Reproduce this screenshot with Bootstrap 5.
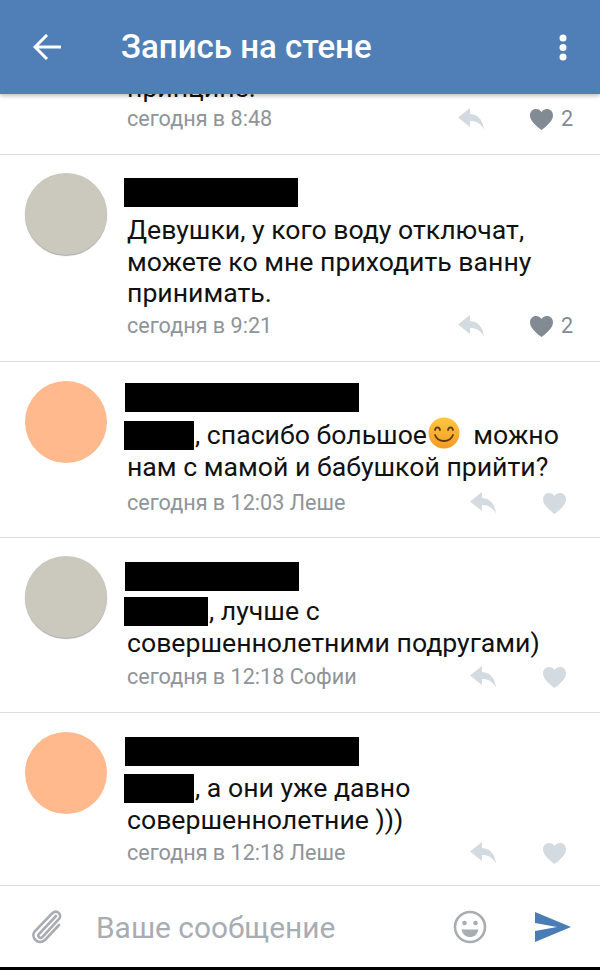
<!DOCTYPE html>
<html lang="ru">
<head>
  <meta charset="UTF-8" />
  <meta name="viewport" content="width=device-width, initial-scale=1" />
  <title>Запись на стене</title>
  <link href="https://cdn.jsdelivr.net/npm/bootstrap@5.3.3/dist/css/bootstrap.min.css" rel="stylesheet" />
  <style>
    html, body { height: 970px; overflow: hidden; }
    body { font-family: Roboto, "Liberation Sans", sans-serif; background: #000; color: #111; }

    .app-screen { height: 967px; background: #fff; }
    .top-bar {
      height: 94px;
      flex: none;
      background: #4f7fb6;
      color: #fff;
      box-shadow: 0 2px 4px rgba(0, 0, 0, .25);
      z-index: 2;
      padding: 0 33px 0 33px;
    }
    .top-title { font-size: 33px; font-weight: 500; margin-left: 60px; }

    .post-feed { min-height: 0; overflow: hidden; }
    .post-row { padding: 19px 28px 20px 25px; border-bottom: 1px solid #dcdcdc; }
    .post-clipped { height: 61px; padding-top: 0; padding-bottom: 20px; justify-content: flex-end; overflow: hidden; }
    .user-pic { width: 82px; height: 82px; flex: none; margin-right: 17px; }
    .pic-grey { background: #cbc8bd; box-shadow: 0 1px 1px rgba(0, 0, 0, .35); margin-top: -1px; }
    .pic-peach { background: #ffb98c; }
    .post-main { min-width: 0; }
    .name-bar { background: #000; height: 29px; margin-left: 1px; }
    .name-short { width: 174px; }
    .name-long { width: 234px; }
    .post-text { font-size: 26.65px; line-height: 31.5px; padding-left: 3px; }
    .hidden-name { display: inline-block; background: #000; height: 29px; vertical-align: -6px; margin-left: -3px; margin-right: 1px; }
    .smile { width: 32px; height: 32px; vertical-align: -5px; margin: -6px 0 0 1px; }
    .post-meta { height: 30px; padding-left: 3px; font-size: 21.6px; color: #8f9499; }
    .reply-icon { width: 27px; height: 22px; }
    .like-icon { width: 23px; height: 21px; }
    .like-off { margin-left: 46px; margin-right: 6px; }
    .like-on { margin-left: 45px; margin-right: 8px; }
    .like-count { width: 11px; color: #828a93; }

    /* per-post vertical offsets, the rows in the app are not quite even */
    .post-a .post-main { padding-top: 4px; }
    .post-a .name-bar { margin-bottom: 8px; margin-left: 0; }
    .post-a .post-meta { margin-top: 1.5px; }
    .post-b { padding-bottom: 19px; }
    .post-b .post-main { padding-top: 2px; }
    .post-b .name-bar { margin-bottom: 8px; }
    .post-b .post-meta { margin-top: 5px; }
    .post-c .post-main { padding-top: 5px; }
    .post-c .name-bar { margin-bottom: 5px; }
    .post-c .post-meta { margin-top: 3px; }
    .post-d { padding-bottom: 17px; }
    .post-d .post-main { padding-top: 5px; }
    .post-d .name-bar { margin-bottom: 7px; }
    .post-d .post-meta { margin-top: 2px; }

    .composer { height: 81px; flex: none; padding: 0 29px 0 30px; }
    .composer-text { font-size: 29.9px; color: #a8adb2; margin-left: 33px; padding-top: 3px; }
    .smile-btn { margin-right: 48px; }
  </style>
</head>
<body>
  <div class="app-screen d-flex flex-column">
    <div class="top-bar d-flex align-items-center position-relative">
      <svg width="28" height="26" viewBox="0 0 28 26" fill="none" stroke="#fff" stroke-width="3"><path d="M28 13H2M14 1 2 13l12 12"/></svg>
      <div class="top-title flex-grow-1">Запись на стене</div>
      <svg width="8" height="27" viewBox="0 0 8 27" fill="#fff"><circle cx="4" cy="4" r="3.5"/><circle cx="4" cy="13.5" r="3.5"/><circle cx="4" cy="23" r="3.5"/></svg>
    </div>

    <div class="post-feed flex-grow-1">
      <div class="post-row post-clipped d-flex flex-column">
        <div class="post-text" style="margin-left:99px">принципе.</div>
        <div class="post-meta d-flex align-items-center" style="margin-left:99px">
          <span class="flex-grow-1">сегодня в 8:48</span>
          <svg class="reply-icon" viewBox="0 0 27 22"><path fill="#d3dae0" d="M12 0 0 9.500 12 19v-6c6 0 11 2.500 14 8.500C25 12 20 6.500 12 6z"/></svg>
          <svg class="like-icon like-on" viewBox="0 0 23 21"><path fill="#828a93" d="M11.500 21C4 15 0 11 0 6.200 0 2.600 2.700 0 6 0c2.200 0 4.300 1.100 5.500 3C12.700 1.100 14.800 0 17 0c3.300 0 6 2.600 6 6.200C23 11 19 15 11.500 21z"/></svg>
          <span class="like-count">2</span>
        </div>
      </div>

      <div class="post-row post-a d-flex">
        <div class="user-pic pic-grey rounded-circle"></div>
        <div class="post-main flex-grow-1">
          <div class="name-bar name-short"></div>
          <div class="post-text">Девушки, у кого воду отключат, можете ко мне приходить ванну принимать.</div>
          <div class="post-meta d-flex align-items-center">
            <span class="flex-grow-1">сегодня в 9:21</span>
            <svg class="reply-icon" viewBox="0 0 27 22"><path fill="#d3dae0" d="M12 0 0 9.500 12 19v-6c6 0 11 2.500 14 8.500C25 12 20 6.500 12 6z"/></svg>
            <svg class="like-icon like-on" viewBox="0 0 23 21"><path fill="#828a93" d="M11.500 21C4 15 0 11 0 6.200 0 2.600 2.700 0 6 0c2.200 0 4.300 1.100 5.500 3C12.700 1.100 14.800 0 17 0c3.300 0 6 2.600 6 6.200C23 11 19 15 11.500 21z"/></svg>
            <span class="like-count">2</span>
          </div>
        </div>
      </div>

      <div class="post-row post-b d-flex">
        <div class="user-pic pic-peach rounded-circle"></div>
        <div class="post-main flex-grow-1">
          <div class="name-bar name-long"></div>
          <div class="post-text"><span class="hidden-name" style="width:70px"></span>, спасибо большое<svg class="smile" viewBox="0 0 32 32"><defs><linearGradient id="smileFill" x1="0" y1="0" x2="0" y2="1"><stop offset="0" stop-color="#fdc843"/><stop offset="1" stop-color="#f59a23"/></linearGradient></defs><circle cx="16" cy="16" r="15.500" fill="url(#smileFill)"/><path d="M7 13c1-3.500 4-3.500 5 0M20 13c1-3.500 4-3.500 5 0M7 18c3 8 15 8 18 0" fill="none" stroke="#5b3a12" stroke-width="1.800" stroke-linecap="round"/></svg>&nbsp; можно нам с мамой и бабушкой прийти?</div>
          <div class="post-meta d-flex align-items-center">
            <span class="flex-grow-1">сегодня в 12:03 Леше</span>
            <svg class="reply-icon" viewBox="0 0 27 22"><path fill="#d3dae0" d="M12 0 0 9.500 12 19v-6c6 0 11 2.500 14 8.500C25 12 20 6.500 12 6z"/></svg>
            <svg class="like-icon like-off" viewBox="0 0 23 21"><path fill="#d3dae0" d="M11.500 21C4 15 0 11 0 6.200 0 2.600 2.700 0 6 0c2.200 0 4.300 1.100 5.500 3C12.700 1.100 14.800 0 17 0c3.300 0 6 2.600 6 6.200C23 11 19 15 11.500 21z"/></svg>
          </div>
        </div>
      </div>

      <div class="post-row post-c d-flex">
        <div class="user-pic pic-grey rounded-circle"></div>
        <div class="post-main flex-grow-1">
          <div class="name-bar name-short"></div>
          <div class="post-text"><span class="hidden-name" style="width:84px"></span>, лучше с совершеннолетними подругами)</div>
          <div class="post-meta d-flex align-items-center">
            <span class="flex-grow-1">сегодня в 12:18 Софии</span>
            <svg class="reply-icon" viewBox="0 0 27 22"><path fill="#d3dae0" d="M12 0 0 9.500 12 19v-6c6 0 11 2.500 14 8.500C25 12 20 6.500 12 6z"/></svg>
            <svg class="like-icon like-off" viewBox="0 0 23 21"><path fill="#d3dae0" d="M11.500 21C4 15 0 11 0 6.200 0 2.600 2.700 0 6 0c2.200 0 4.300 1.100 5.500 3C12.700 1.100 14.800 0 17 0c3.300 0 6 2.600 6 6.200C23 11 19 15 11.500 21z"/></svg>
          </div>
        </div>
      </div>

      <div class="post-row post-d d-flex">
        <div class="user-pic pic-peach rounded-circle"></div>
        <div class="post-main flex-grow-1">
          <div class="name-bar name-long"></div>
          <div class="post-text"><span class="hidden-name" style="width:70px"></span>, а они уже давно совершеннолетние )))</div>
          <div class="post-meta d-flex align-items-center">
            <span class="flex-grow-1">сегодня в 12:18 Леше</span>
            <svg class="reply-icon" viewBox="0 0 27 22"><path fill="#d3dae0" d="M12 0 0 9.500 12 19v-6c6 0 11 2.500 14 8.500C25 12 20 6.500 12 6z"/></svg>
            <svg class="like-icon like-off" viewBox="0 0 23 21"><path fill="#d3dae0" d="M11.500 21C4 15 0 11 0 6.200 0 2.600 2.700 0 6 0c2.200 0 4.300 1.100 5.500 3C12.700 1.100 14.800 0 17 0c3.300 0 6 2.600 6 6.200C23 11 19 15 11.500 21z"/></svg>
          </div>
        </div>
      </div>
    </div>

    <div class="composer d-flex align-items-center">
      <svg width="33" height="36" viewBox="0 0 33 36" fill="none" stroke="#a8adb2" stroke-width="2.600" stroke-linecap="round"><path d="M26 7 9 25c-2 2.500 1 5 3.500 3L29 10c3.500-4-2-10-6.500-6L5 22c-5 6 3 15 10 9l14-15"/></svg>
      <div class="composer-text flex-grow-1">Ваше сообщение</div>
      <svg width="34" height="34" viewBox="0 0 34 34" class="smile-btn"><circle cx="17" cy="17" r="15" fill="none" stroke="#a8adb2" stroke-width="2.600"/><circle cx="11.500" cy="13" r="2.300" fill="#a8adb2"/><circle cx="22.500" cy="13" r="2.300" fill="#a8adb2"/><path d="M8.500 19.500h17c-1 5-4.500 7.500-8.500 7.500s-7.500-2.500-8.500-7.500z" fill="#a8adb2"/></svg>
      <svg width="36" height="30" viewBox="0 0 36 30"><path fill="#4a7db5" d="M0 0 36 15 0 30V19l22-4L0 11z"/></svg>
    </div>
  </div>
  <script src="https://cdn.jsdelivr.net/npm/bootstrap@5.3.3/dist/js/bootstrap.bundle.min.js"></script>
</body>
</html>
